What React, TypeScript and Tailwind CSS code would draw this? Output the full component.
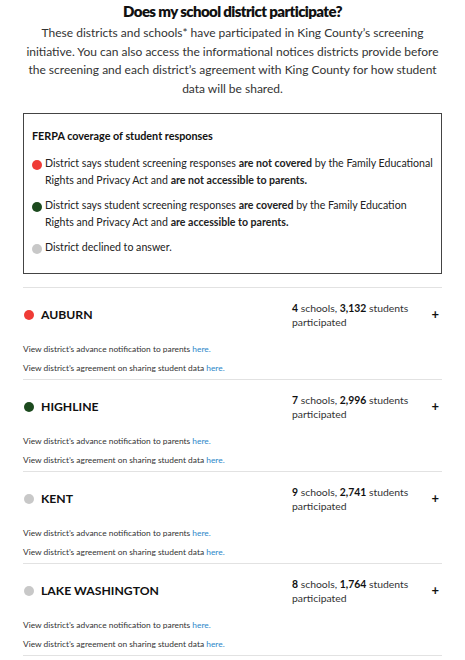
import React from 'react';

type District = {
  name: string;
  color: string;
  schools: string;
  students: string;
};

const districts: District[] = [
  { name: 'AUBURN', color: 'bg-[#ef3b36]', schools: '4', students: '3,132' },
  { name: 'HIGHLINE', color: 'bg-[#1c4a1e]', schools: '7', students: '2,996' },
  { name: 'KENT', color: 'bg-[#c8c8c8]', schools: '9', students: '2,741' },
  { name: 'LAKE WASHINGTON', color: 'bg-[#c8c8c8]', schools: '8', students: '1,764' },
];

function LegendItem({ color, children }: { color: string; children: React.ReactNode }) {
  return (
    <div className="flex items-start gap-[3px]">
      <span className={`mt-[5px] h-[10px] w-[10px] shrink-0 rounded-full ${color}`} />
      <p className="text-[10.6px] leading-[17px] text-[#222]">{children}</p>
    </div>
  );
}

function DistrictRow({ d }: { d: District }) {
  return (
    <div className="border-t border-[#e2e2e2] pt-[13px] pb-[5px]">
      <div className="flex items-center">
        <div className="flex flex-1 items-center gap-[7px] pl-[1px]">
          <span className={`h-[10px] w-[10px] rounded-full ${d.color}`} />
          <span className="text-[12.2px] font-bold text-[#111]">{d.name}</span>
        </div>
        <div className="w-[124px] text-[10.4px] leading-[14px] text-[#333]">
          <b className="text-[#111]">{d.schools}</b> schools,{' '}
          <b className="text-[#111]">{d.students}</b> students participated
        </div>
        <span className="w-[26px] pr-[3px] text-right text-[13px] font-bold text-[#111]">+</span>
      </div>
      <div className="mt-[14px] flex flex-col gap-[7px] text-[8.4px] leading-[12px] text-[#333]">
        <p>
          View district&rsquo;s advance notification to parents{' '}
          <span className="text-[#2a86c9]">here.</span>
        </p>
        <p>
          View district&rsquo;s agreement on sharing student data{' '}
          <span className="text-[#2a86c9]">here.</span>
        </p>
      </div>
    </div>
  );
}

export default function App() {
  return (
    <div
      className="h-[660px] w-[465px] overflow-hidden bg-white"
      style={{ fontFamily: 'Lato, "Noto Sans", sans-serif' }}
    >
      <h2 className="pt-[1px] text-center text-[15px] font-extrabold leading-[20px] tracking-[-0.6px] text-[#111]">
        Does my school district participate?
      </h2>
      <p className="mx-auto mt-[3px] w-[420px] text-center text-[12px] leading-[18.7px] text-[#333]">
        These districts and schools* have participated in King County&rsquo;s screening
        initiative. You can also access the informational notices districts provide before
        the screening and each district&rsquo;s agreement with King County for how student
        data will be shared.
      </p>

      <div className="mx-[23px] mt-[14px] border-[1.5px] border-[#444] px-[8px] pt-[14px] pb-[17px]">
        <h3 className="text-[10.8px] font-bold text-[#111]">FERPA coverage of student responses</h3>
        <div className="mt-[11px] flex flex-col gap-[8px]">
          <LegendItem color="bg-[#ef3b36]">
            District says student screening responses <b>are not covered</b> by the Family
            Educational Rights and Privacy Act and <b>are not accessible to parents.</b>
          </LegendItem>
          <LegendItem color="bg-[#1c4a1e]">
            District says student screening responses <b>are covered</b> by the Family Education
            Rights and Privacy Act and <b>are accessible to parents.</b>
          </LegendItem>
          <LegendItem color="bg-[#c8c8c8]">District declined to answer.</LegendItem>
        </div>
      </div>

      <div className="mx-[23px] mt-[13px]">
        {districts.map((d) => (
          <DistrictRow key={d.name} d={d} />
        ))}
        <div className="border-t border-[#e2e2e2]" />
      </div>
    </div>
  );
}
